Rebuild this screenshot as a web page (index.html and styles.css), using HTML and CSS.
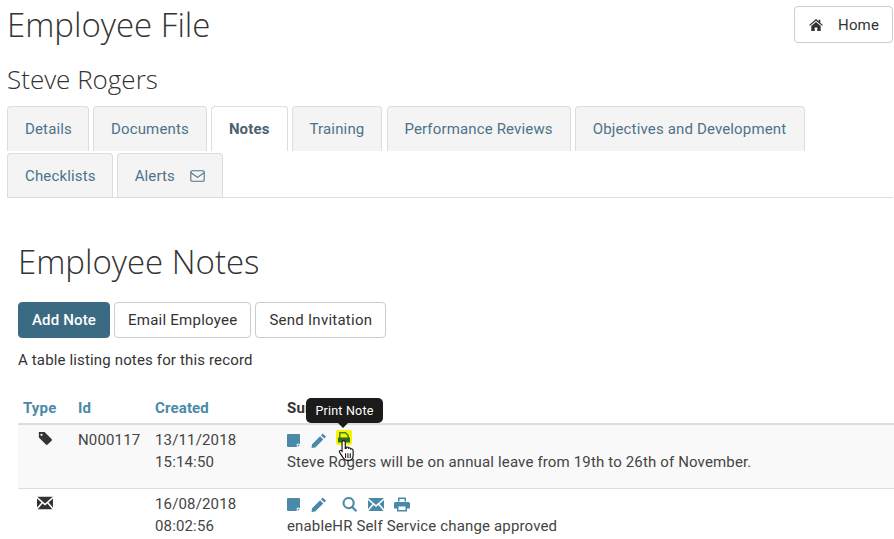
FILE: index.html
```html
<!DOCTYPE html>
<html lang="en">
<head>
<meta charset="utf-8">
<title>Employee File</title>
<link rel="stylesheet" href="styles.css">
</head>
<body>
<svg class="defs" width="0" height="0">
  <symbol id="note" viewBox="0 0 14 14"><path d="M1 0h12a1 1 0 0 1 1 1v9.500h-3.500V14H1a1 1 0 0 1-1-1V1a1 1 0 0 1 1-1zM11.500 11.500H14L11.500 14z" fill="currentColor"/></symbol>
  <symbol id="pencil" viewBox="0 0 16 16"><path d="M12 .6l3.400 3.400-1.800 1.800-3.400-3.400zM9.200 3.400l3.400 3.400-8.600 8.600-4 .6.600-4z" fill="currentColor"/></symbol>
  <symbol id="search" viewBox="0 0 16 16"><path d="M6.500 0a6.500 6.500 0 0 1 5.200 10.400l4 4-1.700 1.600-4-4A6.500 6.500 0 1 1 6.500 0zm0 2.200a4.300 4.300 0 1 0 0 8.600 4.300 4.300 0 0 0 0-8.600z" fill="currentColor"/></symbol>
  <symbol id="mail" viewBox="0 0 16 13"><path d="M0 0h16L8 7zM0 2l4.500 4L0 11zM16 2v9l-4.500-5zM5.500 7L8 9l2.500-2 5 6H.5z" fill="currentColor"/></symbol>
  <symbol id="print" viewBox="0 0 16 14"><path d="M4 0h8v4h-1.500V1.500h-5V4H4zM1.500 4.500h13A1.500 1.500 0 0 1 16 6v5h-3v3H3v-3H0V6a1.500 1.500 0 0 1 1.500-1.500zM4.500 9v3.500h7V9z" fill="currentColor"/></symbol>
</svg>

<header class="top">
  <h1 class="title">Employee File</h1>
  <a class="btn home">
    <svg class="home-icon" viewBox="0 0 16 14"><path d="M8 0l3 2.600V1h2v3.300L16 7l-1 1-7-6-7 6-1-1zM8 3.500l5.500 4.700V14H9.500v-4h-3v4H2.500V8.200z" fill="currentColor"/></svg>
    Home
  </a>
</header>
<h2 class="person">Steve Rogers</h2>

<nav class="tabs">
  <a class="tab tight">Details</a>
  <a class="tab">Documents</a>
  <a class="tab active">Notes</a>
  <a class="tab training">Training</a>
  <a class="tab perf">Performance Reviews</a>
  <a class="tab objectives">Objectives and Development</a>
  <span class="break"></span>
  <a class="tab tight low">Checklists</a>
  <a class="tab low">Alerts
    <svg class="alert-icon" viewBox="0 0 16 13"><rect x=".75" y=".75" width="14.500" height="11.500" rx="1.500" fill="none" stroke="currentColor" stroke-width="1.200"/><path d="M1 3l7 5 7-5" fill="none" stroke="currentColor" stroke-width="1.200"/></svg>
  </a>
</nav>

<main class="content">
  <h2 class="section">Employee Notes</h2>
  <div class="actions">
    <a class="btn primary">Add Note</a>
    <a class="btn wide">Email Employee</a>
    <a class="btn wide">Send Invitation</a>
  </div>
  <p class="caption">A table listing notes for this record</p>

  <table class="notes">
    <thead>
      <tr>
        <th class="c-type link">Type</th>
        <th class="c-id link">Id</th>
        <th class="c-created link">Created</th>
        <th class="c-summary">Summary</th>
      </tr>
    </thead>
    <tbody>
      <tr class="odd">
        <td class="c-type"><svg class="type-icon" viewBox="0 0 16 16"><path d="M1 1h6.500L15.500 9a1.500 1.500 0 0 1 0 2l-4.500 4.500a1.500 1.500 0 0 1-2 0L1 7.500zM4 3a1.300 1.300 0 1 0 0 2.600A1.300 1.300 0 0 0 4 3z" fill="currentColor"/></svg></td>
        <td class="c-id">N000117</td>
        <td class="c-created">13/11/2018<br>15:14:50</td>
        <td class="c-summary">
          <div class="icons">
            <svg class="ic note"><use href="#note"/></svg>
            <svg class="ic pencil"><use href="#pencil"/></svg>
            <span class="hl">
              <svg class="print-doc" viewBox="0 0 14 15"><path d="M2.800 8V2.800h5.700L11.200 5.500V8" fill="none" stroke="#3f8a1e" stroke-width="1.500"/><path d="M1 7.500h12V12.500H1z" fill="#2f6a2a"/></svg>
              <span class="tooltip">Print Note</span>
              <svg class="cursor" viewBox="0 0 18 24"><path d="M6 1.500c1 0 1.700.8 1.700 1.800V10l1-.3V8.500c1.300-.6 2.300 0 2.400 1 1.200-.6 2.200 0 2.400 1 1.200-.5 2.500.2 2.500 1.500v5c0 2.500-1.300 5.500-4.500 5.500H9.500c-2 0-3-1-4-2.700L1.700 14c-.8-1.500 1-2.800 2.200-1.700l.4.500V3.300C4.300 2.300 5 1.500 6 1.500z" fill="#fff" stroke="#111" stroke-width="1.200"/><path d="M8 15v5M10.500 15v5M13 15v5" stroke="#111" stroke-width="1.100"/></svg>
            </span>
          </div>
          <div>Steve Rogers will be on annual leave from 19th to 26th of November.</div>
        </td>
      </tr>
      <tr>
        <td class="c-type"><svg class="type-icon mail-type" viewBox="0 0 16 13"><use href="#mail"/></svg></td>
        <td class="c-id"></td>
        <td class="c-created">16/08/2018<br>08:02:56</td>
        <td class="c-summary">
          <div class="icons">
            <svg class="ic note"><use href="#note"/></svg>
            <svg class="ic pencil spaced"><use href="#pencil"/></svg>
            <svg class="ic"><use href="#search"/></svg>
            <svg class="ic"><use href="#mail"/></svg>
            <svg class="ic"><use href="#print"/></svg>
          </div>
          <div>enableHR Self Service change approved</div>
        </td>
      </tr>
    </tbody>
  </table>
</main>
</body>
</html>
```
FILE: styles.css
```css
* { box-sizing: border-box; }
html, body { margin: 0; padding: 0; }
body {
  height: 539px;
  overflow: hidden;
  background: #fff;
  color: #333;
  font-family: Roboto, "Liberation Sans", sans-serif;
  font-size: 15px;
  letter-spacing: .15px;
  line-height: 22px;
  padding: 0 1px 0 7px;
}
.defs { position: absolute; }
.top { display: flex; justify-content: space-between; align-items: flex-start; padding-top: 6px; }
.title, .person, .section {
  font-family: "Open Sans", sans-serif;
  font-weight: 300;
  letter-spacing: 0;
  margin: 0;
  color: #333;
}
.title { font-size: 33px; line-height: 38px; }
.person { font-size: 26px; line-height: 34px; margin-top: 18px; }
.btn {
  display: inline-flex;
  align-items: center;
  height: 36px;
  padding: 0 13px;
  border: 1px solid #ccc;
  border-radius: 4px;
  background: #fff;
  color: #333;
  white-space: nowrap;
}
.btn.wide { letter-spacing: .25px; }
.home { padding: 0 13px 0 14px; height: 37px; }
.home-icon { width: 14px; height: 12px; margin-right: 15px; color: #333; }
.tabs { display: flex; flex-wrap: wrap; gap: 1px 4px; margin-top: 10px; border-bottom: 1px solid #ddd; }
.break { flex: 0 0 100%; height: 0; }
.tab {
  display: flex;
  align-items: center;
  height: 45px;
  padding: 0 17px;
  background: #f4f4f4;
  border: 1px solid #ddd;
  border-bottom: 0;
  border-radius: 4px 4px 0 0;
  color: #4d728a;
  white-space: nowrap;
}
.tab.tight { padding-right: 16px; }
.tab.low { height: 44px; }
.tab.training { margin-right: 1px; }
.tab.perf { padding-left: 16px; }
.tab.objectives { padding-right: 18px; }
.tab.active { background: #fff; color: #4a6272; font-weight: 700; }
.alert-icon { width: 15px; height: 12px; margin-left: 15px; }
.content { padding: 0 0 0 11px; }
.section { font-size: 33px; line-height: 44px; margin-top: 42px; }
.actions { display: flex; gap: 4px; margin-top: 18px; }
.btn.primary { background: #3a6b82; border-color: #3a6b82; color: #fff; font-weight: 500; }
.caption { margin: 11px 0 0; }
.notes { width: calc(100% + 1px); border-collapse: collapse; margin-top: 26px; table-layout: fixed; }
.notes th { text-align: left; font-weight: 700; padding: 0 0 4px 5px; height: 24px; color: #333; }
.notes th.link { color: #4a8aa8; }
.notes thead tr { border-bottom: 2px solid #ddd; }
.notes td { vertical-align: top; padding: 4px 0 15px 5px; color: #444; }
.notes tr.odd { background: #f9f9f9; border-bottom: 1px solid #ddd; }
.c-type { width: 55px; }
.c-id { width: 77px; }
.c-created { width: 132px; }
.type-icon { display: block; width: 16px; height: 14px; margin: 2px 0 0 14px; color: #333; }
.type-icon.mail-type { margin-top: 3px; }
.icons { display: flex; align-items: center; gap: 10px; height: 21px; margin-top: 1px; color: #4a8aa8; }
.ic { width: 16px; height: 15px; overflow: visible; }
.ic.note { width: 13px; height: 13px; margin-right: 1px; }
.ic.spaced { margin-right: 5px; }
.hl { position: relative; display: block; width: 16px; height: 15px; top: -3px; margin-left: -1px; background: #f5f500; border-radius: 2px; }
.print-doc { display: block; width: 14px; height: 15px; margin: 0 1px; }
.tooltip {
  position: absolute;
  left: -30px;
  top: -32px;
  width: 77px;
  height: 25px;
  background: #1b1b1b;
  border-radius: 5px;
  color: #fff;
  font-size: 12.500px;
  letter-spacing: .2px;
  line-height: 25px;
  text-align: center;
}
.tooltip::after {
  content: "";
  position: absolute;
  left: 32px;
  bottom: -5px;
  border: 5px solid transparent;
  border-bottom: 0;
  border-top-color: #1b1b1b;
}
.cursor { position: absolute; left: 2px; top: 9px; width: 17px; height: 23px; }
```
